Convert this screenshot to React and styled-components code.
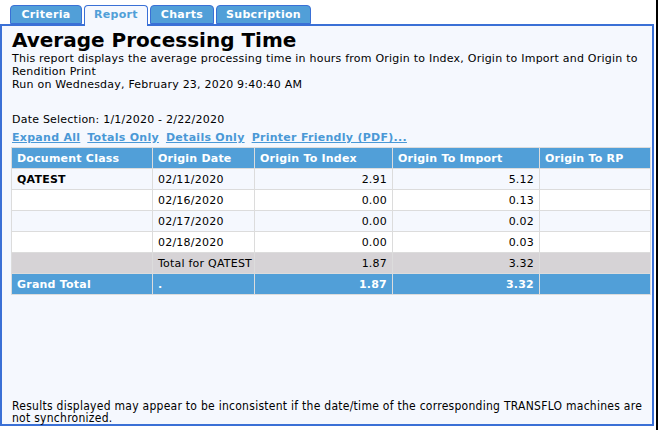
import styled, { createGlobalStyle } from "styled-components";

const GlobalStyle = createGlobalStyle`
  html, body {
    margin: 0;
    padding: 0;
    background: #fff;
  }
  body {
    font-family: "DejaVu Sans", Verdana, sans-serif;
  }
`;

const tabs = [
  { label: "Criteria", width: 72 },
  { label: "Report", width: 64 },
  { label: "Charts", width: 64 },
  { label: "Subcription", width: 95 },
];

const rows = [
  { cls: "QATEST", date: "02/11/2020", index: "2.91", imp: "5.12" },
  { cls: "", date: "02/16/2020", index: "0.00", imp: "0.13" },
  { cls: "", date: "02/17/2020", index: "0.00", imp: "0.02" },
  { cls: "", date: "02/18/2020", index: "0.00", imp: "0.03" },
];

const App = () => {
  return (
    <StFrame>
      <GlobalStyle />
      <StTabBar>
        {tabs.map((tab) => (
          <StTab key={tab.label} $width={tab.width} $active={tab.label === "Report"}>
            {tab.label}
          </StTab>
        ))}
      </StTabBar>
      <StPanel>
        <StTitle>Average Processing Time</StTitle>
        <StText>
          This report displays the average processing time in hours from Origin to Index, Origin
          to Import and Origin to Rendition Print
        </StText>
        <StText>Run on Wednesday, February 23, 2020 9:40:40 AM</StText>
        <StSelection>Date Selection: 1/1/2020 - 2/22/2020</StSelection>
        <StLinks>
          <a href="#">Expand All</a>
          <a href="#">Totals Only</a>
          <a href="#">Details Only</a>
          <a href="#">Printer Friendly (PDF)...</a>
        </StLinks>
        <StTable>
          <colgroup>
            <col style={{ width: 140 }} />
            <col style={{ width: 101 }} />
            <col style={{ width: 137 }} />
            <col style={{ width: 146 }} />
            <col />
          </colgroup>
          <thead>
            <tr>
              <StHead>Document Class</StHead>
              <StHead>Origin Date</StHead>
              <StHead>Origin To Index</StHead>
              <StHead>Origin To Import</StHead>
              <StHead>Origin To RP</StHead>
            </tr>
          </thead>
          <tbody>
            {rows.map((row, i) => (
              <StRow key={row.date} $alt={i % 2 === 1}>
                <StCell $bold>{row.cls}</StCell>
                <StCell>{row.date}</StCell>
                <StCell $num>{row.index}</StCell>
                <StCell $num>{row.imp}</StCell>
                <StCell />
              </StRow>
            ))}
            <StSubTotal>
              <StCell />
              <StCell>Total for QATEST</StCell>
              <StCell $num>1.87</StCell>
              <StCell $num>3.32</StCell>
              <StCell />
            </StSubTotal>
            <StGrandTotal>
              <StCell>Grand Total</StCell>
              <StCell>.</StCell>
              <StCell $num>1.87</StCell>
              <StCell $num>3.32</StCell>
              <StCell />
            </StGrandTotal>
          </tbody>
        </StTable>
        <StFooter>
          Results displayed may appear to be inconsistent if the date/time of the corresponding
          TRANSFLO machines are not synchronized.
        </StFooter>
      </StPanel>
    </StFrame>
  );
};

export default App;

const StFrame = styled.div`
  width: 658px;
  height: 430px;
  border-right: 2px solid #000;
  box-sizing: border-box;
  display: flex;
  flex-direction: column;
  padding-top: 5px;
`;

const StTabBar = styled.div`
  display: flex;
  gap: 2px;
  padding-left: 10px;
  height: 19px;
  position: relative;
  z-index: 1;
`;

const StTab = styled.div`
  box-sizing: border-box;
  width: ${({ $width }) => $width}px;
  height: ${({ $active }) => ($active ? "21px" : "19px")};
  padding-top: 2px;
  border: 1px solid #3a70d6;
  border-bottom: ${({ $active }) => ($active ? "none" : "1px solid #3a70d6")};
  border-radius: 4px 4px 0 0;
  background: ${({ $active }) => ($active ? "#f5f8fe" : "#519fd8")};
  color: ${({ $active }) => ($active ? "#519fd8" : "#fff")};
  font-size: 11px;
  font-weight: bold;
  letter-spacing: 0.3px;
  line-height: 14px;
  text-align: center;
`;

const StPanel = styled.div`
  flex: 1;
  width: 654px;
  margin-bottom: 4px;
  box-sizing: border-box;
  border: 2px solid #3a70d6;
  background: #f5f8fe;
  padding: 3px 0 0 10px;
  display: flex;
  flex-direction: column;
  font-size: 11px;
  letter-spacing: 0.22px;
  color: #000;
`;

const StTitle = styled.h1`
  margin: 0;
  font-size: 20px;
  font-weight: bold;
  letter-spacing: 0;
  line-height: 23px;
`;

const StText = styled.div`
  line-height: 13px;
  padding-right: 10px;
`;

const StSelection = styled.div`
  line-height: 13px;
  margin-top: 22px;
`;

const StLinks = styled.div`
  display: flex;
  gap: 7px;
  margin-top: 5px;
  line-height: 13px;
  letter-spacing: 0.28px;

  a {
    color: #4a98d6;
    font-weight: bold;
    text-decoration: underline;
  }
`;

const StTable = styled.table`
  width: 640px;
  margin-top: 3px;
  border-collapse: separate;
  border-spacing: 1px;
  background: #dcdcdc;
  table-layout: fixed;
  margin-left: -1px;
`;

const StHead = styled.th`
  height: 20px;
  padding: 0 5px;
  background: #519fd8;
  color: #fff;
  font-size: 11px;
  font-weight: bold;
  text-align: left;
`;

const StCell = styled.td`
  height: 20px;
  padding: 0 5px;
  text-align: ${({ $num }) => ($num ? "right" : "left")};
  font-weight: ${({ $bold }) => ($bold ? "bold" : "normal")};
  white-space: nowrap;
`;

const StRow = styled.tr`
  background: ${({ $alt }) => ($alt ? "#fff" : "#f5f8fe")};
`;

const StSubTotal = styled.tr`
  background: #d6d3d6;
`;

const StGrandTotal = styled.tr`
  background: #519fd8;
  color: #fff;

  td {
    font-weight: bold;
  }
`;

const StFooter = styled.div`
  margin-top: auto;
  padding: 0 3px 0 0;
  font-family: "DejaVu Sans Condensed", "Liberation Sans", sans-serif;
  font-size: 12px;
  letter-spacing: 0.27px;
  line-height: 12px;
`;
